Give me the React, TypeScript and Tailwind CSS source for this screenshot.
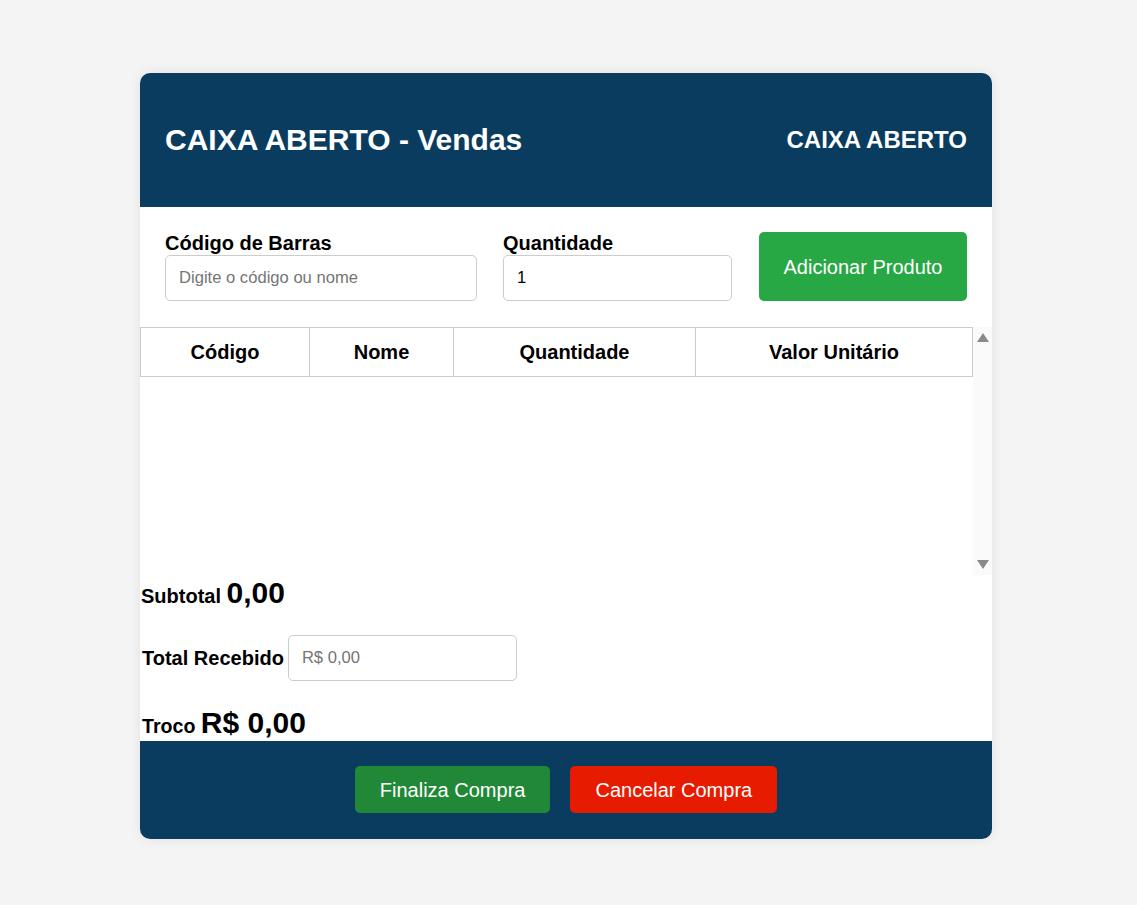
export default function App() {
  const font = "font-['Liberation_Sans',Arial,sans-serif]";
  const inputClass =
    "h-[46px] rounded-[5px] border border-[#cccccc] bg-white px-[13px] text-[16.6px] text-black outline-none placeholder:text-[#757575]";
  const thClass = "border border-[#cccccc] text-center text-[20px] font-bold text-black";

  return (
    <div className={`min-h-[905px] w-full bg-[#f4f4f4] pt-[73px] ${font}`}>
      <div className="ml-[140px] w-[852px] overflow-hidden rounded-[10px] bg-white shadow-[0_0_12px_rgba(0,0,0,0.08)]">
        {/* Header */}
        <header className="flex h-[134px] items-center justify-between bg-[#0a3c5f] px-[25px] text-white">
          <h1 className="text-[30px] font-bold leading-none">CAIXA ABERTO - Vendas</h1>
          <span className="text-[24px] font-bold leading-none">CAIXA ABERTO</span>
        </header>

        {/* Form */}
        <div className="flex items-end gap-[26px] px-[25px] pt-[25px]">
          <label className="flex w-[312px] flex-col">
            <span className="text-[20px] font-bold leading-[23px] text-black">Código de Barras</span>
            <input className={inputClass} placeholder="Digite o código ou nome" />
          </label>
          <label className="flex w-[229px] flex-col">
            <span className="text-[20px] font-bold leading-[23px] text-black">Quantidade</span>
            <input className={inputClass} defaultValue="1" />
          </label>
          <button
            type="button"
            className="ml-auto h-[69px] w-[208px] rounded-[5px] bg-[#28a745] text-[20px] text-white"
          >
            Adicionar Produto
          </button>
        </div>

        {/* Table with scrollbar */}
        <div className="mt-[26px] flex h-[248px]">
          <div className="w-[833px]">
            <table className="w-full border-collapse">
              <thead>
                <tr className="h-[49px]">
                  <th className={`${thClass} w-[169px]`}>Código</th>
                  <th className={`${thClass} w-[144px]`}>Nome</th>
                  <th className={`${thClass} w-[242px]`}>Quantidade</th>
                  <th className={thClass}>Valor Unitário</th>
                </tr>
              </thead>
              <tbody />
            </table>
          </div>
          <div className="flex w-[19px] flex-col items-center justify-between bg-[#fafafa] pb-[6px] pt-[6px]">
            <div className="h-0 w-0 border-x-[6px] border-b-[9px] border-x-transparent border-b-[#8a8a8a]" />
            <div className="h-0 w-0 border-x-[6px] border-t-[9px] border-x-transparent border-t-[#8a8a8a]" />
          </div>
        </div>

        {/* Totals */}
        <div className="text-black">
          <p className="mt-[3px] pl-px text-[20px] font-bold leading-none">
            Subtotal <span className="text-[30px]">0,00</span>
          </p>
          <div className="mt-[27px] flex items-center gap-[4px] pl-[2px]">
            <span className="text-[20px] font-bold">Total Recebido</span>
            <input className={`${inputClass} w-[229px]`} placeholder="R$ 0,00" />
          </div>
          <p className="mt-[27px] pl-[2px] text-[19.6px] font-bold leading-none">
            Troco <span className="text-[30px]">R$ 0,00</span>
          </p>
          <div className="h-[3px]" />
        </div>

        {/* Footer */}
        <footer className="flex h-[98px] items-start justify-center gap-[20px] bg-[#0a3c5f] pt-[25px]">
          <button type="button" className="h-[47px] rounded-[5px] bg-[#218838] px-[25px] text-[20px] text-white">
            Finaliza Compra
          </button>
          <button type="button" className="h-[47px] rounded-[5px] bg-[#e61b00] px-[25px] text-[20px] text-white">
            Cancelar Compra
          </button>
        </footer>
      </div>
    </div>
  );
}
